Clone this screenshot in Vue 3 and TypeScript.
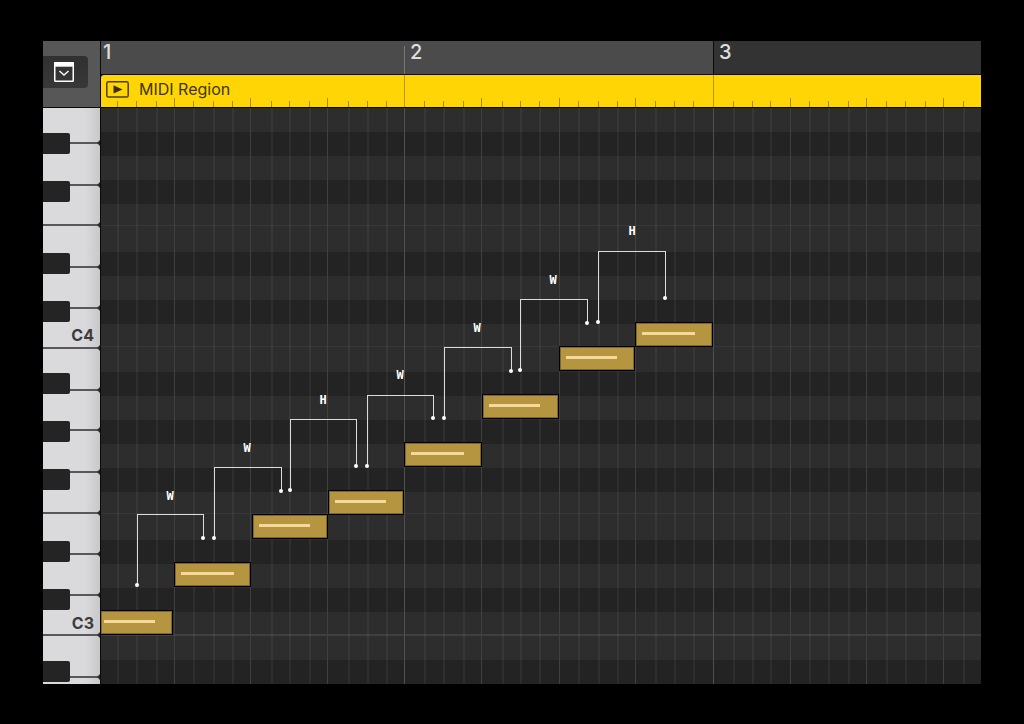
<script setup lang="ts">
interface Note { x: number; y: number; width: number; accent: number; inset: number }
interface Step { label: string; x: number; top: number; right: number; startY: number; endY: number; labelX: number; labelY: number }
interface Line { x: number; kind: 'bar' | 'beat' | 'division' }

const bars = [1, 2, 3]
const ROW = 24

const divisions = [
  16, 35, 55, 73, 92, 112, 131, 149, 170, 188, 208, 226, 247, 266, 285, 303,
  323, 342, 362, 380, 401, 419, 438, 458, 477, 497, 516, 534, 554, 573, 592, 612,
  632, 651, 669, 689, 708, 727, 747, 765, 785, 804, 824, 842, 862,
]
const lines: Line[] = divisions.map((x, i) => ({
  x,
  kind: (i + 1) % 16 === 0 ? 'bar' : (i + 1) % 4 === 0 ? 'beat' : 'division',
}))
const tickTop = { bar: 0, beat: 23, division: 26 }

const darkRows = [1, 3, 6, 8, 11, 13, 15, 18, 20, 23]
const octaveLines = [117, 238, 405, 526]

const keySplits = [34, 76, 116, 158, 199, 239, 281, 321, 363, 404, 445, 486, 526, 568]
const keyNames = [
  { name: 'C4', y: 233 },
  { name: 'C3', y: 521 },
]

const notes: Note[] = [
  { x: -1, y: 502, width: 73, accent: 51, inset: 4 },
  { x: 73, y: 454, width: 77, accent: 53, inset: 7 },
  { x: 151, y: 406, width: 76, accent: 51, inset: 7 },
  { x: 227, y: 382, width: 76, accent: 51, inset: 7 },
  { x: 303, y: 334, width: 78, accent: 53, inset: 7 },
  { x: 381, y: 286, width: 77, accent: 51, inset: 7 },
  { x: 458, y: 238, width: 76, accent: 51, inset: 7 },
  { x: 534, y: 214, width: 78, accent: 53, inset: 7 },
]

const steps: Step[] = [
  { label: 'W', x: 36, top: 406, right: 102, startY: 477, endY: 430, labelX: 69, labelY: 392 },
  { label: 'W', x: 113, top: 359, right: 180, startY: 430, endY: 383, labelX: 146, labelY: 344 },
  { label: 'H', x: 189, top: 311, right: 255, startY: 382, endY: 358, labelX: 222, labelY: 296 },
  { label: 'W', x: 266, top: 287, right: 332, startY: 358, endY: 310, labelX: 299, labelY: 271 },
  { label: 'W', x: 343, top: 239, right: 410, startY: 310, endY: 263, labelX: 376, labelY: 224 },
  { label: 'W', x: 419, top: 191, right: 486, startY: 262, endY: 215, labelX: 452, labelY: 176 },
  { label: 'H', x: 497, top: 143, right: 564, startY: 214, endY: 190, labelX: 531, labelY: 127 },
]
</script>

<template>
  <main class="stage">
    <section class="editor" aria-label="Piano roll">
      <div class="corner">
        <button class="menu" type="button" aria-label="Show editor menu">
          <svg width="20" height="20" viewBox="0 0 20 20" aria-hidden="true">
            <rect x="0.75" y="0.75" width="18.5" height="18.5" rx="0.8" fill="none" stroke="#fff" stroke-width="1.5" />
            <path d="M0 0H20V4.7H0Z" fill="#fff" />
            <path d="M5.5 9L10 13L14.5 9" fill="none" stroke="#fff" stroke-width="1.4" />
          </svg>
        </button>
      </div>

      <header class="timeline">
        <div class="ruler">
          <span v-for="bar in bars" :key="bar" class="bar" :class="'bar-' + bar">{{ bar }}</span>
        </div>
        <div class="region">
          <svg class="ticks" width="880" height="32" aria-hidden="true">
            <rect v-for="line in lines" :key="line.x" :x="line.x" :y="tickTop[line.kind]" width="1" :height="32 - tickTop[line.kind]" :class="'tick-' + line.kind" />
          </svg>
          <svg class="play" width="23" height="17" viewBox="0 0 23 17" aria-hidden="true">
            <rect x="0.8" y="0.8" width="21.4" height="15.2" rx="1.6" fill="none" stroke="#4b4008" stroke-width="1.5" />
            <path d="M7.5 4.2L16.5 8.4L7.5 12.6Z" fill="#3a3108" />
          </svg>
          <span class="region-name">MIDI Region</span>
        </div>
      </header>

      <div class="keyboard">
        <svg width="57" height="576" aria-hidden="true">
          <g v-for="y in keySplits" :key="y">
            <rect x="0" :y="y" width="57" height="2" fill="#58585a" />
            <path :d="`M54 ${y + 1}L57 ${y - 2}V${y + 4}Z`" fill="#2c2c2e" />
          </g>
          <rect v-for="row in darkRows" :key="row" x="-3" :y="row * ROW + 1" width="30" height="21" rx="2" fill="#242425" />
          <text v-for="key in keyNames" :key="key.name" x="51" :y="key.y" class="key-name">{{ key.name }}</text>
        </svg>
      </div>

      <div class="grid">
        <svg width="880" height="576" role="img" aria-label="C major scale from C3 to C4">
          <rect v-for="row in darkRows" :key="'r' + row" x="0" :y="row * ROW" width="880" :height="ROW" fill="#232323" />
          <rect v-for="y in octaveLines" :key="'o' + y" x="0" :y="y" width="880" :height="y === 526 ? 2 : 1" :class="y === 526 ? 'octave-strong' : 'octave'" />
          <rect v-for="line in lines" :key="'l' + line.x" :x="line.x" y="0" :width="line.kind === 'division' ? 2 : 1" height="576" :class="'line-' + line.kind" />
          <g v-for="note in notes" :key="'n' + note.x">
            <rect :x="note.x" :y="note.y" :width="note.width" height="25" fill="#000" />
            <rect :x="note.x + 1" :y="note.y + 1" :width="note.width - 2" height="23" class="note-edge" />
            <rect :x="note.x + 2" :y="note.y + 2" :width="note.width - 4" height="21" class="note-body" />
            <rect :x="note.x + note.inset" :y="note.y + 10" :width="note.accent" height="3" fill="#f5d99c" />
          </g>
          <g v-for="step in steps" :key="'s' + step.x">
            <path :d="`M${step.x} ${step.startY}V${step.top}H${step.right}V${step.endY}`" class="bracket" />
            <circle :cx="step.x" :cy="step.startY" r="2" fill="#fff" />
            <circle :cx="step.right" :cy="step.endY" r="2" fill="#fff" />
            <text :x="step.labelX" :y="step.labelY" class="step-name">{{ step.label }}</text>
          </g>
        </svg>
      </div>
    </section>
  </main>
</template>

<style>
body {
  margin: 0;
  background: #000;
}
</style>

<style scoped>
.stage {
  padding: 41px 43px 40px;
  background: #000;
  font-family: Inter, "Liberation Sans", sans-serif;
}
.editor {
  display: grid;
  grid-template-columns: 58px minmax(0, 1fr);
  overflow: hidden;
}
.corner {
  padding-top: 15px;
  border-right: 1px solid #0a0a0a;
  border-bottom: 1px solid #0a0a0a;
  background: #575757;
}
.menu {
  display: flex;
  align-items: center;
  width: 45px;
  height: 32px;
  padding: 0 0 0 11px;
  border: 0;
  border-radius: 0 4px 4px 0;
  background: linear-gradient(#303030, #383838);
}
.timeline {
  min-width: 0;
  background: #0a0a0a;
}
.ruler {
  display: grid;
  grid-template-columns: 303px 309px 1fr;
  height: 33px;
  margin-bottom: 1px;
  background: #4b4b4b;
}
.bar {
  padding-left: 6px;
  color: #dedede;
  font-size: 20px;
  font-weight: 500;
  line-height: 22px;
}
.bar-1 {
  padding-left: 2px;
}
.bar-2 {
  background: linear-gradient(#777, #777) 0 5px / 1px 28px no-repeat;
}
.bar-3 {
  padding-left: 5px;
  border-left: 1px solid #0a0a0a;
  background: #333;
}
.region {
  position: relative;
  display: flex;
  align-items: center;
  gap: 10px;
  height: 32px;
  margin-bottom: 1px;
  padding: 0 5px 4px;
  box-sizing: border-box;
  border-radius: 3px 0 0 0;
  background: #ffd505;
  overflow: hidden;
}
.ticks {
  position: absolute;
  top: 0;
  left: 0;
}
.tick-bar {
  fill: #b5970b;
}
.tick-beat,
.tick-division {
  fill: #a88d0c;
}
.play {
  position: relative;
  flex: none;
}
.region-name {
  position: relative;
  color: #403609;
  font-size: 16px;
  line-height: 20px;
  white-space: nowrap;
}
.keyboard {
  border-right: 1px solid #0a0a0a;
  background: linear-gradient(90deg, #dadadc 0 42px, #c8c8ca 57px);
}
.keyboard svg,
.grid svg {
  display: block;
}
.key-name {
  fill: #3b3b3d;
  font-size: 16px;
  font-weight: 700;
  text-anchor: end;
}
.grid {
  min-width: 0;
  overflow: hidden;
  background: #2d2d2d;
}
.line-bar {
  fill: #505050;
}
.line-beat {
  fill: #404040;
}
.line-division {
  fill: #fff;
  fill-opacity: 0.05;
}
.octave {
  fill: #383838;
}
.octave-strong {
  fill: #3f3f3f;
}
.note-edge {
  fill: #7d672c;
}
.note-body {
  fill: #b5953f;
}
.bracket {
  fill: none;
  stroke: #dcdcdc;
  shape-rendering: crispEdges;
}
.step-name {
  fill: #fff;
  font-family: "DejaVu Sans Mono", monospace;
  font-size: 12px;
  font-weight: 700;
  text-anchor: middle;
}
</style>
